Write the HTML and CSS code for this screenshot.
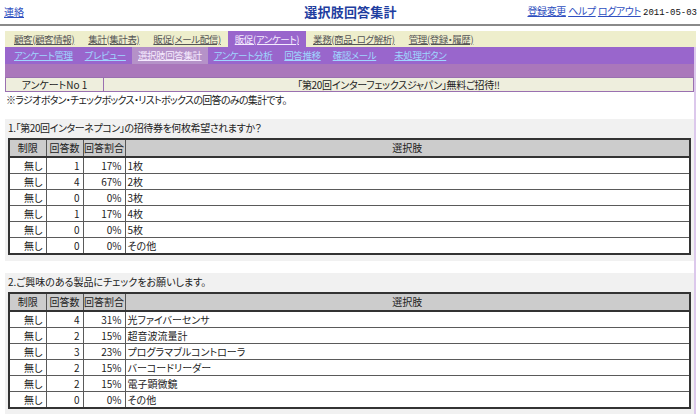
FILE: index.html
```html
<!DOCTYPE html>
<html lang="ja">
<head>
<meta charset="utf-8">
<title>選択肢回答集計</title>
<link rel="stylesheet" href="styles.css">
</head>
<body>
<header class="top">
  <div class="top-left"><a class="link" href="#">連絡</a></div>
  <h1 class="title">選択肢回答集計</h1>
  <div class="top-right"><a class="link" href="#">登録変更</a> <a class="link" href="#">ヘルプ</a> <a class="link" href="#">ログアウト</a> <span class="date">2011-05-03</span></div>
</header>
<div class="rule"></div>
<div class="frame">
  <nav class="tabs">
    <a class="tab" href="#">顧客(顧客情報)</a>
    <a class="tab" href="#">集計(集計表)</a>
    <a class="tab" href="#">販促(メール配信)</a>
    <a class="tab active" href="#">販促(アンケート)</a>
    <a class="tab" href="#">業務(商品・ログ解析)</a>
    <a class="tab" href="#">管理(登録・履歴)</a>
  </nav>
  <div class="panel">
    <nav class="subtabs">
      <a class="subtab" href="#">アンケート管理</a>
      <a class="subtab" href="#">プレビュー</a>
      <a class="subtab active" href="#">選択肢回答集計</a>
      <a class="subtab" href="#">アンケート分析</a>
      <a class="subtab" href="#">回答推移</a>
      <a class="subtab" href="#">確認メール</a>
      <a class="subtab wide" href="#">未処理ボタン</a>
    </nav>
    <div class="band"></div>
    <div class="survey">
      <div class="survey-no">アンケートNo 1</div>
      <div class="survey-name">「第20回インターフェックスジャパン」無料ご招待!!</div>
    </div>
    <p class="note">※ラジオボタン・チェックボックス・リストボックスの回答のみの集計です。</p>

    <section class="question">
      <h2 class="q-title">1.「第20回インターネプコン」の招待券を何枚希望されますか？</h2>
      <table class="result">
        <colgroup><col class="c1"><col class="c2"><col class="c3"><col></colgroup>
        <thead><tr><th>制限</th><th>回答数</th><th>回答割合</th><th>選択肢</th></tr></thead>
        <tbody>
          <tr><td class="num">無し</td><td class="num">1</td><td class="num">17%</td><td class="opt">1枚</td></tr>
          <tr><td class="num">無し</td><td class="num">4</td><td class="num">67%</td><td class="opt">2枚</td></tr>
          <tr><td class="num">無し</td><td class="num">0</td><td class="num">0%</td><td class="opt">3枚</td></tr>
          <tr><td class="num">無し</td><td class="num">1</td><td class="num">17%</td><td class="opt">4枚</td></tr>
          <tr><td class="num">無し</td><td class="num">0</td><td class="num">0%</td><td class="opt">5枚</td></tr>
          <tr><td class="num">無し</td><td class="num">0</td><td class="num">0%</td><td class="opt">その他</td></tr>
        </tbody>
      </table>
    </section>

    <section class="question">
      <h2 class="q-title">2.ご興味のある製品にチェックをお願いします。</h2>
      <table class="result">
        <colgroup><col class="c1"><col class="c2"><col class="c3"><col></colgroup>
        <thead><tr><th>制限</th><th>回答数</th><th>回答割合</th><th>選択肢</th></tr></thead>
        <tbody>
          <tr><td class="num">無し</td><td class="num">4</td><td class="num">31%</td><td class="opt">光ファイバーセンサ</td></tr>
          <tr><td class="num">無し</td><td class="num">2</td><td class="num">15%</td><td class="opt">超音波流量計</td></tr>
          <tr><td class="num">無し</td><td class="num">3</td><td class="num">23%</td><td class="opt">プログラマブルコントローラ</td></tr>
          <tr><td class="num">無し</td><td class="num">2</td><td class="num">15%</td><td class="opt">バーコードリーダー</td></tr>
          <tr><td class="num">無し</td><td class="num">2</td><td class="num">15%</td><td class="opt">電子顕微鏡</td></tr>
          <tr><td class="num">無し</td><td class="num">0</td><td class="num">0%</td><td class="opt">その他</td></tr>
        </tbody>
      </table>
    </section>
  </div>
</div>
</body>
</html>
```

FILE: styles.css
```css
html, body {
  margin: 0;
  padding: 0;
  background: #ffffff;
}

body {
  font-family: "Noto Sans CJK JP", "Noto Sans", sans-serif;
  font-feature-settings: "palt";
  font-size: 10px;
  line-height: 12px;
  color: #222222;
  width: 700px;
  height: 414px;
  overflow: hidden;
}

a {
  text-decoration: underline;
}

.top {
  display: grid;
  grid-template-columns: 1fr auto 1fr;
  align-items: center;
  height: 24px;
  padding: 0 3px 0 4px;
}

.top-left {
  justify-self: start;
}

.top-right {
  justify-self: end;
  white-space: nowrap;
}

.link {
  color: #2f4fc0;
}

.top-right .link {
  letter-spacing: -0.4px;
}

.title {
  margin: 0;
  font-size: 13px;
  line-height: 16px;
  font-weight: bold;
  color: #1f3ea0;
  letter-spacing: 0.2px;
}

.date {
  font-family: "Liberation Mono", "DejaVu Sans Mono", monospace;
  font-size: 9px;
  color: #111111;
}

.rule {
  height: 2px;
  background: #8a8a8a;
}

.frame {
  margin: 5px 4px 0 5px;
}

.tabs {
  display: flex;
  height: 16px;
  padding-left: 2px;
  background: #eeeecc;
}

.tab {
  padding: 0 7px;
  font-size: 9.5px;
  letter-spacing: -0.4px;
  line-height: 16px;
  color: #555555;
  white-space: nowrap;
}

.tab.active {
  background: #9966cc;
  color: #f4ecff;
}

.panel {
  border-right: 2px solid #dcc8ec;
}

.subtabs {
  display: flex;
  height: 17px;
  padding-left: 3px;
  background: #9966cc;
}

.subtab {
  padding: 0 6px;
  font-size: 9.5px;
  letter-spacing: -0.4px;
  line-height: 16px;
  color: #9fd6ff;
  white-space: nowrap;
}

.subtab.active {
  background: #b592c8;
  color: #f6eaff;
}

.subtab.wide {
  margin-left: 6px;
}

.band {
  height: 13px;
  background: #aa77bb;
}

.survey {
  display: flex;
  height: 13px;
  border: 1px solid #9a70b0;
  background: #eeeedd;
  line-height: 13px;
  color: #222222;
}

.survey-no {
  width: 97px;
  text-align: center;
  border-right: 1px solid #9a70b0;
}

.survey-name {
  flex: 1;
  text-align: center;
  letter-spacing: -0.3px;
}

.note {
  margin: 2px 0 13px 1px;
  line-height: 12px;
  letter-spacing: -0.7px;
}

.question {
  background: #f1f1f1;
  padding: 0 3px 6px;
  margin-bottom: 12px;
}

.q-title {
  margin: 0;
  height: 19px;
  line-height: 18px;
  font-size: 10px;
  font-weight: normal;
  color: #222222;
}

.question:first-of-type .q-title {
  letter-spacing: -0.4px;
}

.result {
  width: 100%;
  border-collapse: collapse;
  border: 2px solid #333333;
  background: #ffffff;
}

.result col.c1 { width: 37px; }
.result col.c2 { width: 37px; }
.result col.c3 { width: 42px; }

.result th {
  height: 16px;
  padding: 0;
  background: #cccccc;
  font-weight: normal;
  text-align: center;
  border: 1px solid #555555;
  border-bottom: 2px solid #333333;
  line-height: 14px;
}

.result td {
  height: 15px;
  padding: 0;
  border: 1px solid #5a5a5a;
  line-height: 14px;
}

.result td.num {
  text-align: right;
  padding-right: 3px;
}

.result td.opt {
  text-align: left;
  padding-left: 2px;
}
```
